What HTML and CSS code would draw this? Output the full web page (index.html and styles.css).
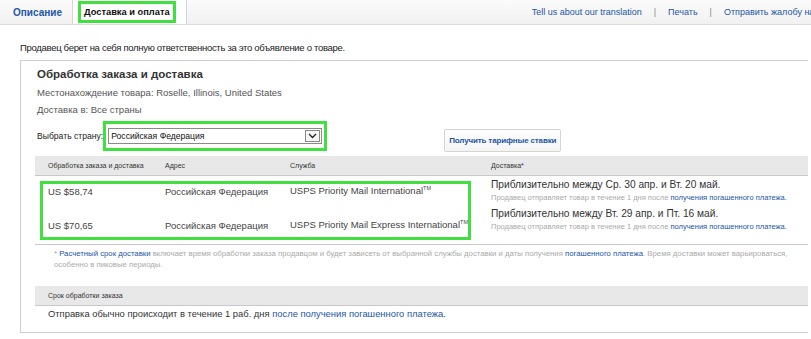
FILE: index.html
```html
<!DOCTYPE html>
<html lang="ru">
<head>
  <meta charset="UTF-8" />
  <title>Доставка и оплата</title>
  <link rel="stylesheet" href="styles.css">
</head>
<body>
  <div class="tabs">
    <div class="tab">Описание</div>
    <div class="tab active"><span class="mark">Доставка и оплата</span></div>
    <div class="links">
      <a href="#">Tell us about our translation</a>
      <span class="sep">|</span>
      <a href="#">Печать</a>
      <span class="sep">|</span>
      <a href="#">Отправить жалобу на объявление</a>
    </div>
  </div>

  <div class="content">
    <p class="notice">Продавец берет на себя полную ответственность за это объявление о товаре.</p>

    <div class="box">
      <h3>Обработка заказа и доставка</h3>
      <p class="meta">Местонахождение товара: Roselle, Illinois, United States</p>
      <p class="meta">Доставка в: Все страны</p>

      <div class="country">
        <label>Выбрать страну:</label>
        <div class="mark-box">
          <div class="select">
            <span>Российская Федерация</span>
            <span class="arrow">
              <svg width="9" height="6" viewBox="0 0 9 6"><path d="M1 1 L4.5 4.5 L8 1" fill="none" stroke="#222" stroke-width="1.3"/></svg>
            </span>
          </div>
        </div>
        <button class="rates">Получить тарифные ставки</button>
      </div>

      <div class="table">
        <div class="thead">
          <div>Обработка заказа и доставка</div>
          <div>Адрес</div>
          <div>Служба</div>
          <div>Доставка*</div>
        </div>
        <div class="tbody">
          <div class="row">
            <div class="cell">US $58,74</div>
            <div class="cell">Российская Федерация</div>
            <div class="cell">USPS Priority Mail International<sup>TM</sup></div>
            <div class="delivery">
              <div class="when">Приблизительно между Ср. 30 апр. и Вт. 20 май.</div>
              <div class="sub">Продавец отправляет товар в течение 1 дня после <a href="#">получения погашенного платежа.</a></div>
            </div>
          </div>
          <div class="row">
            <div class="cell">US $70,65</div>
            <div class="cell">Российская Федерация</div>
            <div class="cell">USPS Priority Mail Express International<sup>TM</sup></div>
            <div class="delivery">
              <div class="when">Приблизительно между Вт. 29 апр. и Пт. 16 май.</div>
              <div class="sub">Продавец отправляет товар в течение 1 дня после <a href="#">получения погашенного платежа.</a></div>
            </div>
          </div>
          <div class="rows-mark"></div>
        </div>
      </div>

      <p class="footnote">* <a href="#">Расчетный срок доставки</a> включает время обработки заказа продавцом и будет зависеть от выбранной службы доставки и даты получения <a href="#">погашенного платежа</a>. Время доставки может варьироваться, особенно в пиковые периоды.</p>

      <div class="table handling">
        <div class="thead single">
          <div>Срок обработки заказа</div>
        </div>
        <p class="handling-text">Отправка обычно происходит в течение 1 раб. дня <a href="#">после получения погашенного платежа.</a></p>
      </div>
    </div>
  </div>
</body>
</html>
```

FILE: styles.css
```css
body {
  margin: 0;
  background: #fff;
  color: #333;
  font-family: "Liberation Sans", Arial, sans-serif;
  overflow: hidden;
}

a {
  color: #2356a6;
  text-decoration: none;
}

/* tab bar */
.tabs {
  display: flex;
  align-items: stretch;
  height: 24px;
  background: linear-gradient(to bottom, #fbfbfb, #f1f1f1);
  border-bottom: 1px solid #dcdcdc;
  white-space: nowrap;
  overflow: hidden;
}

.tab {
  display: flex;
  align-items: center;
  padding: 0 10px 0 13px;
  font-size: 10px;
  font-weight: bold;
  color: #2356a6;
}

.tab.active {
  background: #fff;
  color: #111;
  font-size: 9.3px;
  border-left: 1px solid #d6d6d6;
  border-right: 1px solid #d6d6d6;
  margin-bottom: -1px;
  padding: 0 10px 1px 5px;
}

.mark {
  border: 3px solid #3fe03f;
  padding: 3px 3px;
}

.links {
  display: flex;
  align-items: center;
  gap: 12px;
  margin-left: 345px;
  font-size: 9px;
}

.sep {
  color: #888;
}

/* content */
.content {
  padding: 0 3px 0 20px;
}

.notice {
  margin: 17px 0 6px;
  font-size: 9.5px;
  letter-spacing: -0.3px;
  line-height: 12px;
  color: #222;
}

.box {
  border: 1px solid #cfcfcf;
  border-right: none;
  padding: 6px 0 12px 14px;
}

.box h3 {
  margin: 0 0 6px 2px;
  font-size: 11.5px;
  line-height: 14px;
  color: #333;
}

.meta {
  margin: 0 0 5px 2px;
  font-size: 9.5px;
  line-height: 12px;
  color: #555;
}

.country {
  display: flex;
  align-items: flex-start;
  margin: 4px 0 4px 2px;
  font-size: 8.6px;
  color: #222;
}

.country label {
  margin-top: 9px;
  line-height: 12px;
}

.mark-box {
  border: 3px solid #3fe03f;
  padding: 4px 2px;
}

.select {
  display: flex;
  align-items: center;
  justify-content: space-between;
  box-sizing: border-box;
  width: 214px;
  height: 16px;
  border: 1px solid #8a8a8a;
  padding-left: 2px;
  color: #111;
}

.arrow {
  display: flex;
  align-items: center;
  justify-content: center;
  width: 13px;
  height: 10px;
  border: 1px solid #888;
  margin-right: 1px;
  background: #f6f6f6;
}

.rates {
  margin-left: 117px;
  margin-top: 8px;
  height: 23px;
  padding: 0 4px;
  border: 1px solid #d4d4d4;
  border-radius: 2px;
  background: linear-gradient(to bottom, #fff, #f4f4f4);
  color: #2356a6;
  font-family: inherit;
  font-size: 8px;
  letter-spacing: -0.15px;
  font-weight: bold;
}

/* tables */
.thead {
  display: grid;
  grid-template-columns: 117px 125px 201px 1fr;
  align-items: center;
  height: 19px;
  padding-left: 13px;
  background: #e8e8e8;
  border-bottom: 1px solid #c8c8c8;
  font-size: 7px;
  color: #333;
}

.thead.single {
  display: block;
  line-height: 19px;
}

.tbody {
  position: relative;
  border-bottom: 1px solid #c8c8c8;
}

.row {
  display: grid;
  grid-template-columns: 117px 125px 201px 1fr;
  align-items: center;
  height: 30px;
  padding-left: 13px;
  font-size: 9.5px;
  color: #444;
}

.row + .row {
  height: 38px;
}

.cell sup {
  font-size: 5.5px;
}

.delivery {
  align-self: start;
  padding-top: 3px;
}

.row + .row .delivery {
  padding-top: 2px;
}

.when {
  font-size: 10.2px;
  line-height: 12px;
  color: #333;
}

.sub {
  margin-top: 1px;
  font-size: 7.5px;
  line-height: 11px;
  color: #aaa;
}

.rows-mark {
  position: absolute;
  left: 5px;
  top: 5px;
  box-sizing: border-box;
  width: 431px;
  height: 59px;
  border: 3px solid #3fe03f;
}

.footnote {
  margin: 3px 0 16px 19px;
  padding-right: 14px;
  font-size: 7.75px;
  line-height: 11px;
  color: #aaa;
}

.handling-text {
  margin: 2px 0 0 13px;
  font-size: 9.4px;
  line-height: 12px;
  color: #333;
}
```
